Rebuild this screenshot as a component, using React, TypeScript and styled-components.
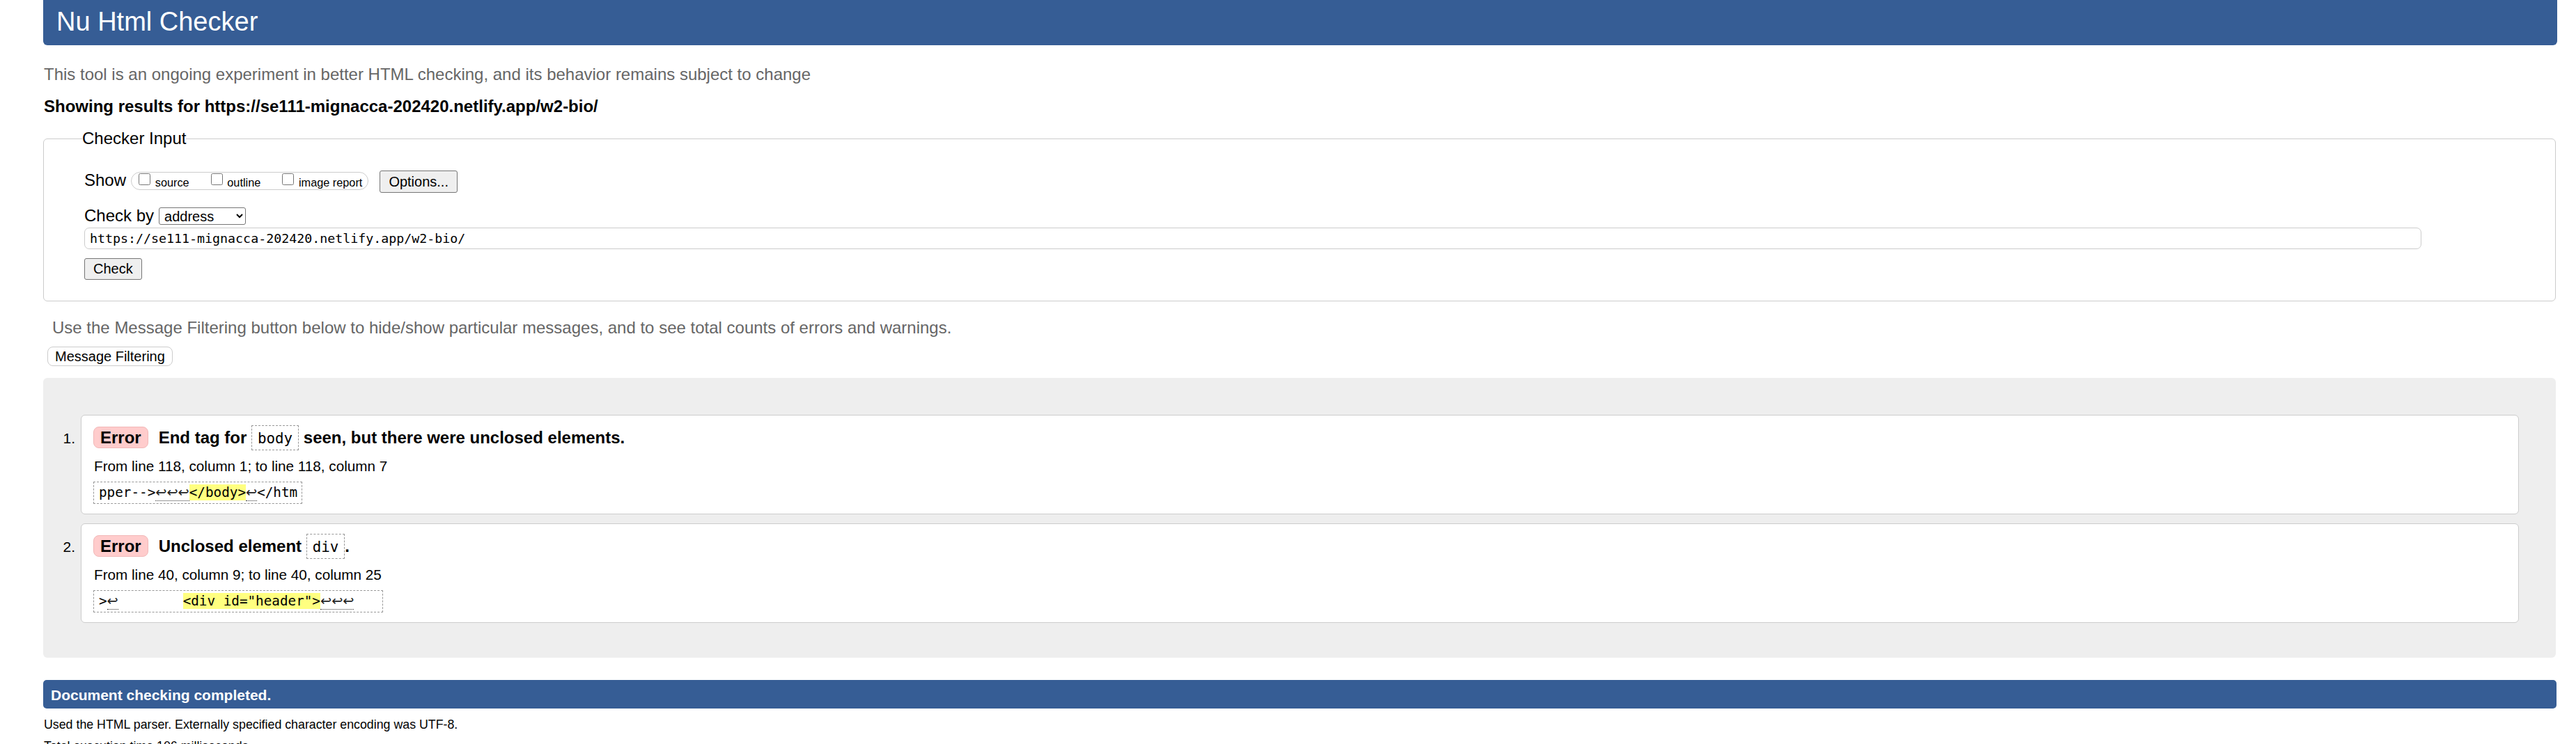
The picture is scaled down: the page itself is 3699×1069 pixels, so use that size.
import React from 'react';
import styled, { createGlobalStyle } from 'styled-components';

const GlobalStyle = createGlobalStyle`
  html, body { margin: 0; padding: 0; background: #fff; }
  body { font-family: "Liberation Sans", Arial, sans-serif; color: #000; }
`;

const Page = styled.div`
  padding: 0 27px 40px 62px;
  display: flex;
  flex-direction: column;
  align-items: stretch;
`;

const Header = styled.h1`
  margin: 0;
  height: 65px;
  box-sizing: border-box;
  padding: 9px 19px 0;
  background: #365d95;
  color: #fff;
  font-size: 38px;
  font-weight: normal;
  line-height: 44px;
  border-radius: 0 0 6px 6px;
`;

const Para = styled.p<{ $top: number; $left?: number; $bold?: boolean; $muted?: boolean }>`
  margin: ${p => p.$top}px 0 0 ${p => p.$left ?? 1}px;
  font-size: 24px;
  line-height: 28px;
  font-weight: ${p => (p.$bold ? 'bold' : 'normal')};
  color: ${p => (p.$muted ? '#666' : '#000')};
`;

const Fieldset = styled.fieldset`
  margin: 18px 2px 0 0;
  padding: 32px 192px 30px 58px;
  border: 1px solid #ccc;
  border-radius: 6px;
  min-width: 0;
`;

const Legend = styled.legend`
  padding: 0;
  margin-left: -3px;
  font-size: 24px;
  line-height: 28px;
`;

const Row = styled.div<{ $top?: number }>`
  display: flex;
  align-items: flex-start;
  margin-top: ${p => p.$top ?? 0}px;
`;

const Label = styled.span`
  font-size: 24px;
  line-height: 28px;
  margin-right: 7px;
`;

const OptionGroup = styled.div`
  margin-top: 2px;
  height: 26px;
  box-sizing: border-box;
  border: 1px solid #ccc;
  border-radius: 13px;
  padding: 0 8px 0 10px;
  display: flex;
  align-items: flex-start;
  gap: 31px;
`;

const Option = styled.label`
  display: flex;
  align-items: flex-start;
`;

const Check = styled.input`
  width: 17px;
  height: 17px;
  margin: 1px 6.7px 0 0;
`;

const OptionText = styled.span`
  font-size: 16.3px;
  line-height: 18px;
  margin-top: 4.5px;
`;

const Button = styled.button<{ $light?: boolean; $h: number }>`
  height: ${p => p.$h}px;
  box-sizing: border-box;
  padding: 0 ${p => (p.$light ? 10 : 12)}px;
  font-family: "Liberation Sans", Arial, sans-serif;
  font-size: 20px;
  line-height: ${p => p.$h - 2}px;
  color: #000;
  background: ${p => (p.$light ? '#fff' : '#efefef')};
  border: 1px solid ${p => (p.$light ? '#ccc' : '#767676')};
  border-radius: ${p => (p.$light ? 8 : 3)}px;
`;

const OptionsButton = styled(Button)`
  margin-left: 16px;
`;

const Select = styled.select`
  margin-top: 2.3px;
  width: 125px;
  height: 25px;
  font-family: "Liberation Sans", Arial, sans-serif;
  font-size: 20px;
  border: 1px solid #767676;
  border-radius: 3px;
  background: #fff;
  color: #000;
  padding: 0 0 0 3px;
`;

const UrlInput = styled.input`
  display: block;
  width: 100%;
  margin-top: 3.3px;
  height: 31px;
  box-sizing: border-box;
  border: 1px solid #ccc;
  border-radius: 7px;
  padding: 0 7px;
  font-family: "DejaVu Sans Mono", "Liberation Mono", monospace;
  font-size: 18.3px;
  color: #000;
`;

const CheckButton = styled(Button)`
  margin-top: 13px;
  padding: 0 12px;
`;

const FilterButton = styled(Button)`
  align-self: flex-start;
  margin: 13.3px 0 0 6px;
`;

const Results = styled.div`
  margin: 17px 2px 0 0;
  background: #eee;
  border-radius: 6px;
  padding: 53px 53px 50px 0;
`;

const List = styled.ol`
  list-style: none;
  margin: 0;
  padding: 0;
  display: flex;
  flex-direction: column;
  gap: 13px;
`;

const Item = styled.li`
  display: flex;
  align-items: flex-start;
`;

const Num = styled.span`
  width: 54px;
  box-sizing: border-box;
  padding-right: 8px;
  text-align: right;
  font-size: 21px;
  line-height: 24px;
  margin-top: 21.7px;
`;

const Card = styled.div`
  flex: 1;
  min-width: 0;
  background: #fff;
  border: 1px solid #ccc;
  border-radius: 6px;
  padding: 14px 18px 14px 17px;
`;

const Message = styled.div`
  font-size: 24px;
  line-height: 24px;
  font-weight: bold;
`;

const Badge = styled.span`
  display: inline-block;
  background: #fcc;
  border: 1px solid #f2b8b8;
  border-radius: 8px;
  padding: 3px 9px 2px;
  line-height: 24px;
  margin-right: 15px;
`;

const Code = styled.code`
  display: inline-block;
  font-family: "DejaVu Sans Mono", "Liberation Mono", monospace;
  font-size: 20.8px;
  font-weight: normal;
  line-height: 24px;
  padding: 6px 8px 4px;
  border: 1px dashed #999;
`;

const Location = styled.p`
  margin: 11px 0 0 1px;
  font-size: 20.7px;
  line-height: 24px;
`;

const Extract = styled.p`
  margin: 10px 0 0;
  width: fit-content;
  border: 1px dashed #999;
  padding: 3px 6px 3px 7px;
  font-family: "DejaVu Sans Mono", "Liberation Mono", monospace;
  font-size: 19.3px;
  line-height: 24px;
  white-space: pre;
`;

const Mark = styled.b`
  font-weight: normal;
  background: #ffff80;
`;

const Lf = styled.span`
  font-family: "DejaVu Sans", sans-serif;
  border-bottom: 1px dotted #333;
  color: #222;
`;

const Completed = styled.h2`
  margin: 32px 1px 0 0;
  height: 41px;
  box-sizing: border-box;
  padding: 10px 11px 0;
  background: #365d95;
  color: #fff;
  font-size: 21px;
  line-height: 24px;
  font-weight: bold;
  border-radius: 5px;
`;

const Note = styled.p<{ $top: number }>`
  margin: ${p => p.$top}px 0 0 1px;
  font-size: 17.8px;
  line-height: 24px;
`;

export default function App() {
  return (
    <>
      <GlobalStyle />
      <Page>
        <Header>Nu Html Checker</Header>
        <Para $top={28} $muted>
          This tool is an ongoing experiment in better HTML checking, and its behavior remains subject to change
        </Para>
        <Para $top={18} $bold>
          Showing results for https://se111-mignacca-202420.netlify.app/w2-bio/
        </Para>

        <Fieldset>
          <Legend>Checker Input</Legend>
          <Row>
            <Label>Show</Label>
            <OptionGroup>
              <Option>
                <Check type="checkbox" />
                <OptionText>source</OptionText>
              </Option>
              <Option>
                <Check type="checkbox" />
                <OptionText>outline</OptionText>
              </Option>
              <Option>
                <Check type="checkbox" />
                <OptionText>image report</OptionText>
              </Option>
            </OptionGroup>
            <OptionsButton $h={32}>Options...</OptionsButton>
          </Row>
          <Row $top={18.7}>
            <Label>Check by</Label>
            <Select defaultValue="address">
              <option value="address">address</option>
              <option value="file">file upload</option>
              <option value="text">text input</option>
            </Select>
          </Row>
          <UrlInput type="url" defaultValue="https://se111-mignacca-202420.netlify.app/w2-bio/" />
          <CheckButton $h={31}>Check</CheckButton>
        </Fieldset>

        <Para $top={23.7} $left={13} $muted>
          Use the Message Filtering button below to hide/show particular messages, and to see total counts of errors and warnings.
        </Para>
        <FilterButton $light $h={28}>Message Filtering</FilterButton>

        <Results>
          <List>
            <Item>
              <Num>1.</Num>
              <Card>
                <Message>
                  <Badge>Error</Badge>End tag for <Code>body</Code> seen, but there were unclosed elements.
                </Message>
                <Location>From line 118, column 1; to line 118, column 7</Location>
                <Extract>
                  {'pper-->'}
                  <Lf>↩↩↩</Lf>
                  <Mark>{'</body>'}</Mark>
                  <Lf>↩</Lf>
                  {'</htm'}
                </Extract>
              </Card>
            </Item>
            <Item>
              <Num>2.</Num>
              <Card>
                <Message>
                  <Badge>Error</Badge>Unclosed element <Code>div</Code>.
                </Message>
                <Location>From line 40, column 9; to line 40, column 25</Location>
                <Extract>
                  {'>'}
                  <Lf>↩</Lf>
                  {'        '}
                  <Mark>{'<div id="header">'}</Mark>
                  <Lf>↩↩↩</Lf>
                  {'   '}
                </Extract>
              </Card>
            </Item>
          </List>
        </Results>

        <Completed>Document checking completed.</Completed>
        <Note $top={11}>Used the HTML parser. Externally specified character encoding was UTF-8.</Note>
        <Note $top={7}>Total execution time 106 milliseconds.</Note>
      </Page>
    </>
  );
}
